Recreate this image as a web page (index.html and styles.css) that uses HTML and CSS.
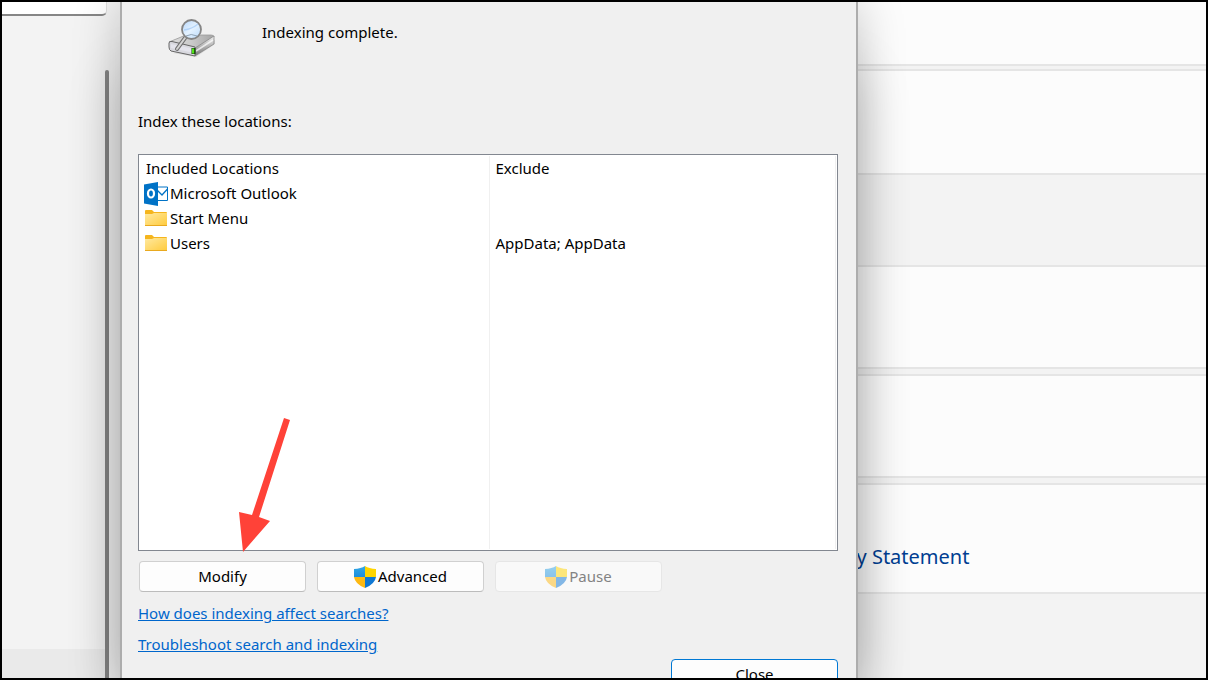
FILE: index.html
```html
<!DOCTYPE html>
<html lang="en">
<head>
  <meta charset="UTF-8">
  <meta name="viewport" content="width=device-width, initial-scale=1.0">
  <title>Indexing Options</title>
  <link rel="stylesheet" href="styles.css">
</head>
<body>

  <div class="screen">
    <nav class="sidebar">
      <input type="text" class="search" aria-label="Find a setting">
      <div class="nav-space">
        <div class="scrollbar"></div>
      </div>
      <div class="nav-item"></div>
    </nav>

    <section class="dialog">
      <div class="status">
        <svg class="drive-icon" viewBox="0 0 48 40" aria-hidden="true">
          <defs>
            <linearGradient id="top" x1="0" y1="0" x2="1" y2="0"><stop offset="0" stop-color="#dedede"/><stop offset=".5" stop-color="#cacaca"/><stop offset="1" stop-color="#a4a4a4"/></linearGradient>
            <linearGradient id="side" x1="0" y1="0" x2="0" y2="1"><stop offset="0" stop-color="#f2f2f2"/><stop offset="1" stop-color="#777"/></linearGradient>
            <linearGradient id="lens" x1="0" y1="0" x2="1" y2="1"><stop offset="0" stop-color="#b5d6fb"/><stop offset=".5" stop-color="#e4f2ff"/><stop offset="1" stop-color="#b9dafb"/></linearGradient>
          </defs>
          <path d="M5 35l23 4 19-13v-4z" fill="#ccc" opacity=".6"/>
          <path d="M1 24L18 17l25 0q3 0 3 2L27 31z" fill="url(#top)" stroke="#999" stroke-width=".8"/>
          <path d="M27 30l19-12v8L27 38z" fill="url(#side)" stroke="#888" stroke-width=".8"/>
          <path d="M28 33l17-11" stroke="#fff" stroke-width="1.5" opacity=".7"/>
          <path d="M1 25q0-2 3-1.500L27 29v9L3 33q-2-1-2-4z" fill="#d8d8de" stroke="#666" stroke-width="1"/>
          <path d="M3 26l21 4.500v4L3 30z" fill="#e4e4ec"/>
          <path d="M23.500 30h4v6h-4z" fill="#143a10"/>
          <path d="M24 30.500h2.200v5H24z" fill="#51e517"/>
          <path d="M17 20L9 31" stroke="#707070" stroke-width="4" stroke-linecap="round"/>
          <path d="M17 20L9 31" stroke="#d4d4d4" stroke-width="2" stroke-linecap="round"/>
          <circle cx="23.500" cy="11.500" r="9.500" fill="url(#lens)" stroke="#858585" stroke-width="1.800"/>
          <path d="M16 12q8-1 14-6" fill="none" stroke="#9fc8f5" stroke-width="1.500" opacity=".7"/>
          <path d="M18 18q5-3 11 0" fill="none" stroke="#8fa3b5" stroke-width="1"/>
        </svg>
        <span>Indexing complete.</span>
      </div>

      <p class="caption" id="locations-label">Index these locations:</p>

      <div class="list">
        <table class="locations" aria-labelledby="locations-label">
          <thead>
            <tr><th>Included Locations</th><th>Exclude</th></tr>
          </thead>
          <tbody>
            <tr>
              <td>
                <div class="place">
                  <svg class="place-icon" viewBox="0 0 24 24" aria-hidden="true">
                    <path d="M12 5h11.500v13.500H12z" fill="#fff" stroke="#0072c6"/>
                    <path d="M13 8l5 5 5.500-6" fill="none" stroke="#0072c6" stroke-width="1.300"/>
                    <path d="M0 2.500L14 0v24L0 21.500z" fill="#0072c6"/>
                    <ellipse cx="7" cy="11.500" rx="3" ry="4" fill="none" stroke="#fff" stroke-width="2.200"/>
                  </svg>
                  Microsoft Outlook
                </div>
              </td>
              <td></td>
            </tr>
            <tr>
              <td>
                <div class="place">
                  <svg class="place-icon" viewBox="0 0 24 24" aria-hidden="true">
                    <defs><linearGradient id="folder" x1="0" y1="0" x2="1" y2="1"><stop offset="0" stop-color="#ffe9a0"/><stop offset="1" stop-color="#ffcb3d"/></linearGradient></defs>
                    <path d="M1 4q0-1 1-1h6l2 2h12q1 0 1 1v4H1z" fill="#f5b51d"/>
                    <path d="M1 7h7l2-1h13v12.500H1z" fill="url(#folder)"/>
                    <path d="M1 18.500h22" stroke="#e9a91f"/>
                  </svg>
                  Start Menu
                </div>
              </td>
              <td></td>
            </tr>
            <tr>
              <td>
                <div class="place">
                  <svg class="place-icon" viewBox="0 0 24 24" aria-hidden="true">
                    <path d="M1 4q0-1 1-1h6l2 2h12q1 0 1 1v4H1z" fill="#f5b51d"/>
                    <path d="M1 7h7l2-1h13v12.500H1z" fill="url(#folder)"/>
                    <path d="M1 18.500h22" stroke="#e9a91f"/>
                  </svg>
                  Users
                </div>
              </td>
              <td>AppData; AppData</td>
            </tr>
            <tr class="filler"><td></td><td></td></tr>
          </tbody>
        </table>
        <svg class="arrow" viewBox="0 0 52 136" aria-hidden="true">
          <path d="M46 1l6 2-31 97 11 4L5 135 1 95l13 3z" fill="#ff4238"/>
        </svg>
      </div>

      <div class="actions">
        <button type="button">Modify</button>
        <button type="button">
          <svg class="shield" viewBox="0 0 22 22" aria-hidden="true">
            <defs>
              <clipPath id="shield-shape"><path d="M11 0q4 2.500 11 3v8q-1 7-11 11Q1 18 0 11V3q7-.5 11-3z"/></clipPath>
              <linearGradient id="blue" x1="0" y1="0" x2="0" y2="1"><stop offset="0" stop-color="#33a9e6"/><stop offset="1" stop-color="#1c8ede"/></linearGradient>
            </defs>
            <g clip-path="url(#shield-shape)">
              <path d="M0 0h11v11H0z" fill="url(#blue)"/>
              <path d="M11 0h11v11H11z" fill="#ffd500"/>
              <path d="M0 11h11v11H0z" fill="#fdb913"/>
              <path d="M11 11h11v11H11z" fill="#0f78d4"/>
            </g>
          </svg>
          Advanced
        </button>
        <button type="button" disabled>
          <svg class="shield" viewBox="0 0 22 22" aria-hidden="true">
            <g clip-path="url(#shield-shape)">
              <path d="M0 0h11v11H0z" fill="url(#blue)"/>
              <path d="M11 0h11v11H11z" fill="#ffd500"/>
              <path d="M0 11h11v11H0z" fill="#fdb913"/>
              <path d="M11 11h11v11H11z" fill="#0f78d4"/>
            </g>
          </svg>
          Pause
        </button>
      </div>

      <div class="links">
        <a href="#">How does indexing affect searches?</a>
        <a href="#">Troubleshoot search and indexing</a>
      </div>

      <div class="footer">
        <button type="button" class="close">Close</button>
      </div>
    </section>

    <main class="settings">
      <div class="card first"></div>
      <div class="card"></div>
      <div class="card spaced"></div>
      <div class="card"></div>
      <div class="card privacy"><a href="#">Privacy Statement</a></div>
    </main>
  </div>

</body>
</html>
```

FILE: styles.css
```css
* {
  box-sizing: border-box;
}

body {
  margin: 0;
  font-family: "Noto Sans", "Open Sans", sans-serif;
  font-size: 15px;
  line-height: 25px;
  color: #000;
}

.screen {
  display: flex;
  height: 100vh;
  border: 2px solid #000;
  background-color: #f3f3f3;
  overflow: hidden;
}

/* Settings navigation */
.sidebar {
  flex: 0 0 118px;
  display: flex;
  flex-direction: column;
}

.search {
  width: 105px;
  height: 14px;
  border: 1px solid #ddd;
  border-width: 0 1px 2px 0;
  border-bottom-color: #868686;
  border-radius: 0 0 5px 0;
  background-color: #fff;
}

.nav-space {
  flex: 1;
  display: flex;
  justify-content: flex-end;
  padding: 54px 11px 0 0;
}

.scrollbar {
  width: 4px;
  margin-bottom: -30px;
  border-radius: 2px 2px 0 0;
  background-color: #858585;
}

.nav-item {
  height: 29px;
  width: 103px;
  background-color: #eaeaea;
}

/* Indexing options window */
.dialog {
  position: relative;
  z-index: 1;
  flex: 0 0 738px;
  display: flex;
  flex-direction: column;
  padding: 0 18px 0 16px;
  border: 2px solid #adadad;
  border-width: 0 2px;
  background-color: #f0f0f0;
  box-shadow: 0 70px 50px rgba(0, 0, 0, 0.2), 0 0 44px rgba(0, 0, 0, 0.22);
}

.status {
  flex: 0 0 107px;
  display: flex;
  align-items: flex-start;
  gap: 46px;
  padding: 16px 0 0 30px;
}

.status span {
  padding-top: 2px;
}

.drive-icon {
  width: 48px;
  height: 40px;
}

.caption {
  margin: 0 0 20px;
}

.list {
  position: relative;
  flex: 0 0 397px;
  display: flex;
  padding: 1px;
  border: 1px solid #828790;
  background-color: #fff;
}

.locations {
  width: 100%;
  table-layout: fixed;
  border-collapse: collapse;
}

.locations th,
.locations td {
  height: 25px;
  padding: 0 6px;
  border-right: 1px solid #f0f0f0;
  font-weight: normal;
  text-align: left;
}

.locations th:first-child {
  width: 349px;
}

.locations .place {
  display: flex;
  align-items: center;
  gap: 2px;
  margin-left: -2px;
}

.locations .filler td {
  height: auto;
}

.place-icon {
  width: 24px;
  height: 24px;
}

.arrow {
  position: absolute;
  left: 99px;
  bottom: -3px;
  width: 52px;
  height: 136px;
}

.actions {
  display: flex;
  gap: 11px;
  padding: 10px 1px 9px;
}

button {
  display: flex;
  align-items: center;
  justify-content: center;
  gap: 2px;
  width: 167px;
  height: 31px;
  padding: 0;
  border: 1px solid #d0d0d0;
  border-bottom-color: #bcbcbc;
  border-radius: 4px;
  background-color: #fdfdfd;
  font: inherit;
  color: #000;
}

button:disabled {
  border-color: #e6e6e6;
  background-color: #f9f9f9;
  color: #838383;
}

button:disabled .shield {
  opacity: 0.5;
}

.shield {
  width: 22px;
  height: 22px;
}

.links {
  display: flex;
  flex-direction: column;
  align-items: flex-start;
  gap: 6px;
}

.links a {
  color: #0066cc;
}

.footer {
  display: flex;
  justify-content: flex-end;
  padding-top: 2px;
}

.footer .close {
  border-color: #0078d4;
}

/* Settings page behind the window */
.settings {
  flex: 1;
  margin-left: -58px;
}

.card {
  height: 106px;
  margin-bottom: 3px;
  border: 2px solid #e5e5e5;
  border-width: 2px 0;
  background-color: #fcfcfc;
}

.card.first {
  height: 64px;
  border-top: 0;
}

.card.spaced {
  height: 104px;
  margin: 90px 0 5px;
}

.card.spaced + .card {
  height: 104px;
  margin-bottom: 5px;
}

.card.privacy {
  height: 111px;
  padding-top: 57px;
}

.privacy a {
  font-size: 20px;
  line-height: 30px;
  color: #003e92;
  text-decoration: none;
}
```
